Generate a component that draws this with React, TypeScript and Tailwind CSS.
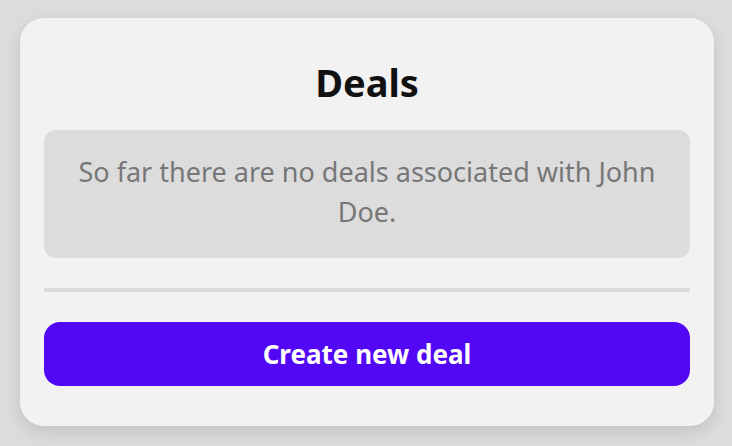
export default function App() {
  return (
    <div className="min-h-[446px] w-[732px] bg-[#dcdcdc] pt-[18px] pl-[20px]" style={{ fontFamily: '"Noto Sans", "Liberation Sans", sans-serif' }}>
      <div className="w-[694px] h-[408px] rounded-[24px] bg-[#f2f2f2] shadow-[0_6px_16px_rgba(0,0,0,0.12)] px-6 pt-[40px] flex flex-col">
        <h1 className="text-center text-[38px] leading-[48px] font-bold text-[#111]">Deals</h1>
        <div className="mt-[24px] h-[128px] rounded-[12px] bg-[#dcdcdc] px-8 flex items-center justify-center">
          <p className="text-center text-[27px] leading-[40px] text-[#777] -mt-[4px]">So far there are no deals associated with John Doe.</p>
        </div>
        <div className="mt-[30px] h-[4px] bg-[#dcdcdc]" />
        <button className="mt-[30px] h-[64px] rounded-[16px] bg-[#5308f5] text-white text-[26px] font-bold">Create new deal</button>
      </div>
    </div>
  );
}
